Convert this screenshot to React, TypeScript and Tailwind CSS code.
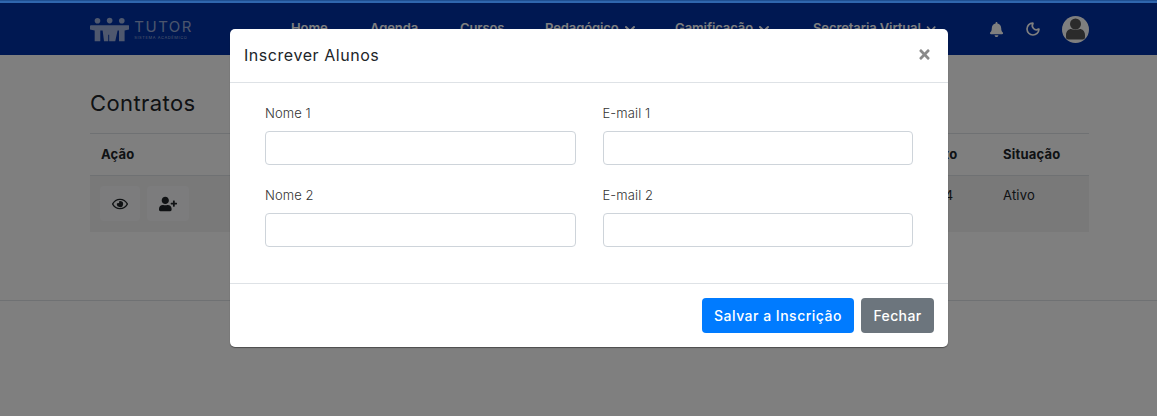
import { ChevronDown, Moon } from 'lucide-react';
import { FaBell, FaRegEye, FaTimes, FaUserPlus } from 'react-icons/fa';

const menu = [
  { label: 'Home', width: 'w-[79px]' },
  { label: 'Agenda', width: 'w-[90px]' },
  { label: 'Cursos', width: 'w-[85px]' },
  { label: 'Pedagógico', width: 'w-[130px]', caret: true },
  { label: 'Gamificação', width: 'w-[138px]', caret: true },
  { label: 'Secretaria Virtual', width: 'w-[125px]', caret: true },
];

function Logo() {
  return (
    <div className="flex w-[103px] items-center gap-[5px]">
      <svg width="42" height="25" viewBox="0 0 42 25" fill="#ffffff" fillOpacity="0.62">
        <circle cx="8" cy="3.200" r="3" />
        <circle cx="21" cy="3" r="3" />
        <circle cx="34" cy="3.200" r="3" />
        <path d="M1 8h40a1 1 0 0 1 1 1v3.500l-5 1V25h-6V13.500h-1.500L27 25h-6.500v-7h-1v7H15l-1.500-11.500H11V25H5V13.500l-5-1V9a1 1 0 0 1 1-1z" />
      </svg>
      <div className="flex flex-col leading-none text-white/60">
        <span className="text-[15px] tracking-[1.500px]">TUTOR</span>
        <span className="mt-0.5 whitespace-nowrap text-[4px] tracking-[0.600px]">SISTEMA ACADÊMICO</span>
      </div>
    </div>
  );
}

function Field({ label }: { label: string }) {
  return (
    <div className="flex flex-col">
      <label className="h-[26px] text-[13px] font-light leading-[16px] tracking-[0.1px] text-[#333333]">{label}</label>
      <input
        type="text"
        className="h-[34px] w-full rounded-[4px] border border-[#ced4da] bg-white"
      />
    </div>
  );
}

export default function App() {
  return (
    <div className="relative h-[416px] w-[1157px] overflow-hidden bg-white font-['Inter','Noto_Sans',sans-serif] text-[#212529]">
      <nav className="flex h-[55px] items-center bg-[#0030a4] pl-[90px] pr-[68px] pt-[3px] text-white">
        <Logo />
        <ul className="ml-[98px] flex items-center text-[13px] font-semibold tracking-[-0.1px]">
          {menu.map((item) => (
            <li key={item.label} className={`flex shrink-0 items-center gap-[3px] whitespace-nowrap ${item.width}`}>
              {item.label}
              {item.caret && <ChevronDown size={16} strokeWidth={3} />}
            </li>
          ))}
        </ul>
        <div className="ml-auto flex items-center">
          <FaBell size={15} />
          <Moon size={16} strokeWidth={2.500} className="ml-[21px]" />
          <div className="ml-[21px] flex h-[27px] w-[27px] items-center justify-center rounded-full bg-white">
            <svg width="19" height="22" viewBox="0 0 19 22" fill="#565656">
              <circle cx="9.500" cy="6" r="5.500" />
              <path d="M0 17c0-4 3-6 5-6 1.500 1 7.500 1 9 0 2 0 5 2 5 6v2a2.500 2.500 0 0 1-2.500 2.500h-14A2.500 2.500 0 0 1 0 19z" />
            </svg>
          </div>
        </div>
      </nav>

      <main className="pl-[90px] pr-[68px] pt-[33px]">
        <h1 className="h-[45px] text-[22px] leading-[30px] tracking-[0.4px] text-[#212529]">Contratos</h1>
        <div className="flex h-[43px] items-center justify-between border-t border-b border-[#dee2e6] px-[11px] text-[13px] font-bold tracking-[0.2px]">
          <span>Ação</span>
          <div className="flex">
            <span className="w-[103px]">Contrato</span>
            <span className="w-[75px]">Situação</span>
          </div>
        </div>
        <div className="flex h-[56px] items-start justify-between bg-[#f2f2f2] pl-[10px] pr-[11px] pt-[10px] text-[13px]">
          <div className="flex gap-[7px]">
            <button type="button" className="flex h-[35px] w-[40px] items-center justify-center rounded-[4px] bg-[#f8f9fa]">
              <FaRegEye size={16} />
            </button>
            <button type="button" className="flex h-[35px] w-[42px] items-center justify-center rounded-[4px] bg-[#f8f9fa]">
              <FaUserPlus size={18} />
            </button>
          </div>
          <div className="flex">
            <span className="w-[82px]">2024</span>
            <span className="w-[75px] tracking-[0.2px]">Ativo</span>
          </div>
        </div>
      </main>
      <div className="mt-[68px] border-t border-[#dee2e6]" />

      <div className="absolute inset-0 bg-black/50" />
      <div className="absolute inset-x-0 top-0 h-[3px] border-t border-[#1f4f92] bg-[#2f66ae]" />

      <div className="absolute left-[230px] top-[29px] flex w-[718px] flex-col rounded-[5px] bg-white shadow-[0_1px_1px_rgba(0,0,0,0.4)]">
        <div className="flex h-[54px] items-center justify-between border-b border-[#dee2e6] pb-[2px] pl-[14px] pr-[16px]">
          <h2 className="text-[16px] tracking-[0.55px] text-[#212529]">Inscrever Alunos</h2>
          <FaTimes size={15} className="text-[#8a8a8a]" />
        </div>
        <div className="grid h-[200px] grid-cols-2 content-start gap-x-[27px] gap-y-[22px] px-[35px] pt-[22px]">
          <Field label="Nome 1" />
          <Field label="E-mail 1" />
          <Field label="Nome 2" />
          <Field label="E-mail 2" />
        </div>
        <div className="flex h-[64px] items-center justify-end gap-[7px] border-t border-[#dee2e6] pr-[14px]">
          <button type="button" className="h-[35px] w-[152px] rounded-[4px] bg-[#007bff] text-[14px] font-medium tracking-[0.5px] text-white">
            Salvar a Inscrição
          </button>
          <button type="button" className="h-[35px] w-[73px] rounded-[4px] bg-[#6c757d] text-[14px] font-medium tracking-[0.4px] text-white">
            Fechar
          </button>
        </div>
      </div>
    </div>
  );
}
